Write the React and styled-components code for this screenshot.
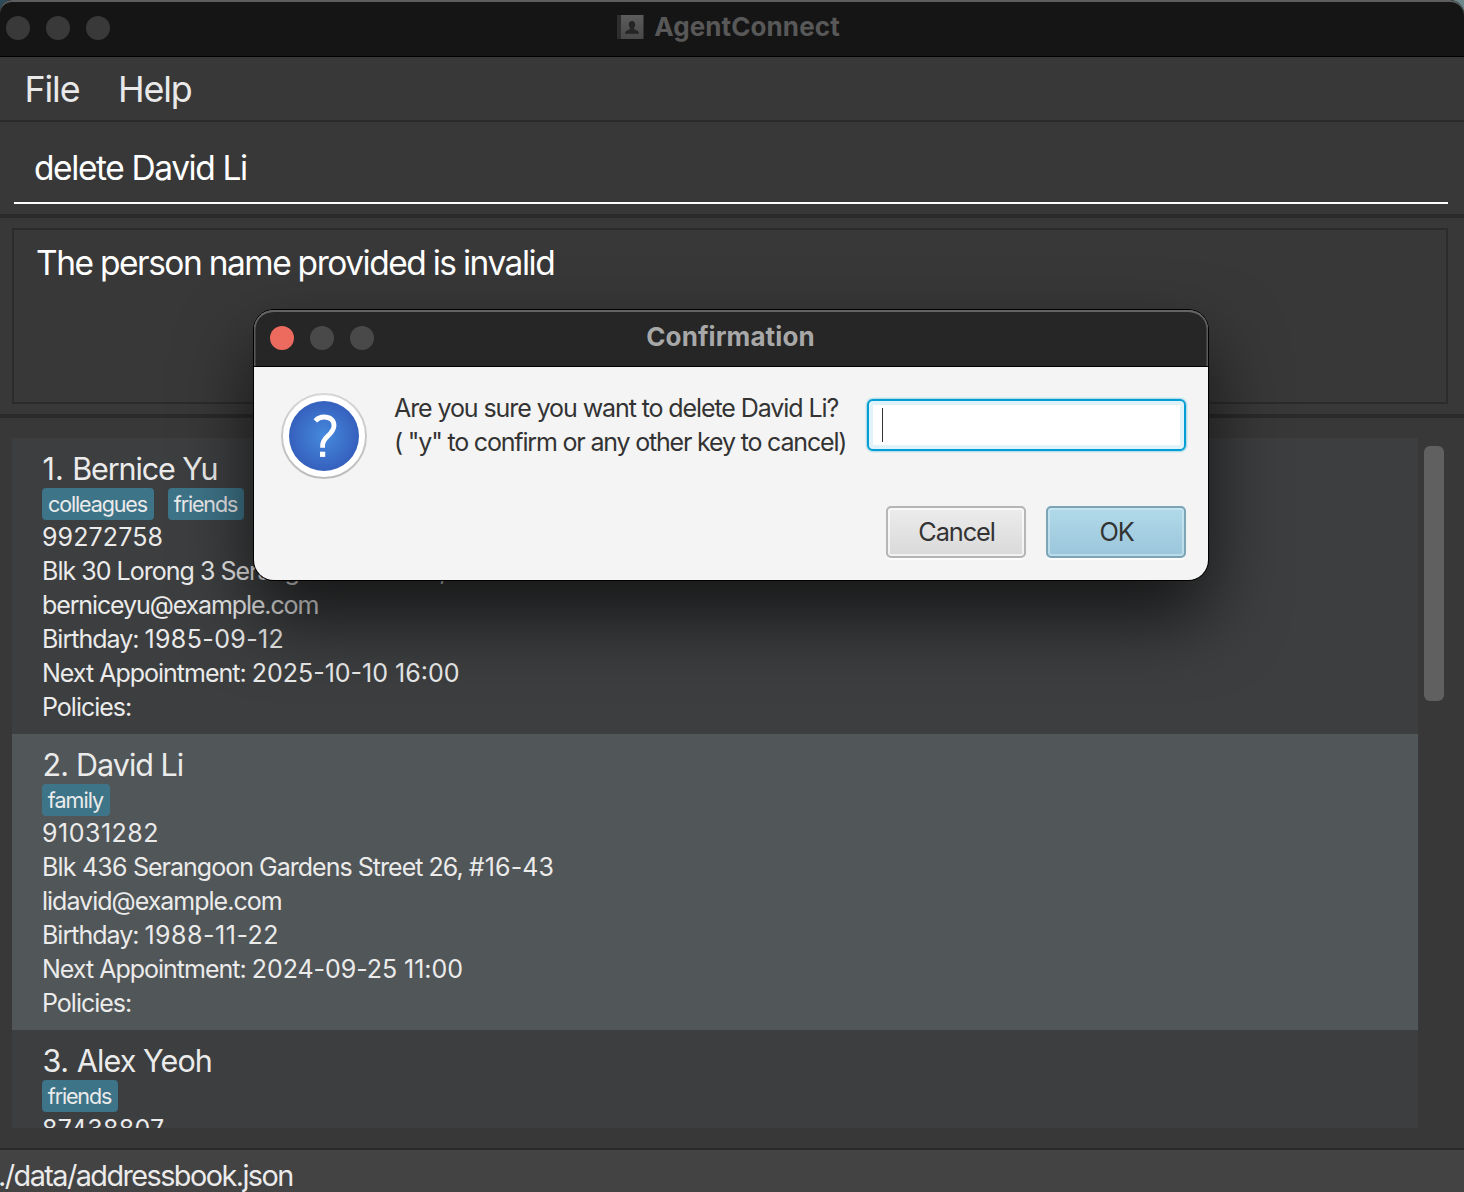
import React from "react";
import styled, { createGlobalStyle, css } from "styled-components";

const GlobalStyle = createGlobalStyle`
  * { box-sizing: border-box; }
  html, body { margin: 0; padding: 0; background: #383838; overflow: hidden; }
  body { font-family: Inter, "Liberation Sans", sans-serif; }
`;

const Desktop = styled.div`
  position: relative;
  width: 1464px;
  height: 1192px;
  overflow: hidden;
  background: linear-gradient(90deg, #2c4a58, #6f8a8d);
`;

const Window = styled.div`
  display: flex;
  flex-direction: column;
  width: 1464px;
  height: 1192px;
  overflow: hidden;
  background: #383838;
  border-radius: 12px 14px 0 0;
`;

const TitleBar = styled.div`
  position: relative;
  flex: none;
  display: flex;
  align-items: center;
  justify-content: center;
  height: 57px;
  background: #151515;
  border-bottom: 1px solid #000;
  border-radius: 12px 14px 0 0;
  box-shadow: inset 0 2px 0 #5c5e5f;
  ${(p) =>
    p.$dialog &&
    css`
      padding: 0 1px 2px 0;
      background: #262626;
      border-radius: 20px 20px 0 0;
      box-shadow: inset 0 2px 0 #646464, inset 2px 0 0 -0.5px #5a5a5a, inset -2px 0 0 -0.5px #5a5a5a;
    `}
`;

const Lights = styled.div`
  position: absolute;
  left: ${(p) => p.$left}px;
  top: 16px;
  display: flex;
  gap: 16px;
`;

const Light = styled.span`
  width: 24px;
  height: 24px;
  border-radius: 50%;
  background: ${(p) => p.$color};
`;

const Title = styled.span`
  display: block;
  font-size: 26px;
  line-height: 32px;
  font-weight: 700;
  letter-spacing: 0.1px;
  color: ${(p) => p.$color};
  white-space: nowrap;
`;

const TitleGroup = styled.div`
  display: flex;
  align-items: center;
  gap: 10px;
  margin: 0 7px 3px 0;
`;

const MenuBar = styled.nav`
  flex: none;
  display: flex;
  align-items: center;
  gap: 38.5px;
  height: 65px;
  padding: 0 0 0 24.5px;
  border-bottom: 2px solid #2a2a2a;
`;

const MenuItem = styled.span`
  font-size: 35.8px;
  line-height: 44px;
  letter-spacing: -1.1px;
  color: #e9e9e9;
`;

const CommandArea = styled.div`
  flex: none;
  height: 96px;
  padding: 12px 16px 0 14px;
  border-bottom: 4px solid #2a2a2a;
`;

const CommandField = styled.div`
  display: flex;
  align-items: center;
  height: 70px;
  padding: 0 0 1px 20px;
  border-bottom: 2px solid #fff;
  font-size: 33.5px;
  letter-spacing: -1.4px;
  color: #fff;
  white-space: pre;
`;

const ResultArea = styled.div`
  flex: none;
  height: 200px;
  padding: 10px 16px 10px 12px;
  border-bottom: 4px solid #2a2a2a;
`;

const ResultBox = styled.div`
  height: 176px;
  padding: 11px 22px;
  border: 2px solid #2b2b2b;
  font-size: 33.5px;
  line-height: 44px;
  letter-spacing: -1.47px;
  word-spacing: -0.6px;
  color: #fff;
`;

const ListArea = styled.div`
  flex: 1;
  min-height: 0;
  display: flex;
  padding: 20px 20px 20px 12px;
`;

const PersonList = styled.div`
  flex: none;
  width: 1406px;
  overflow: hidden;
`;

const Track = styled.div`
  width: 26px;
  padding: 8px 0 0 6px;
`;

const Thumb = styled.div`
  width: 20px;
  height: 255px;
  border-radius: 6px;
  background: #606060;
`;

const Card = styled.div`
  height: 296px;
  padding: 10px 30px;
  background: ${(p) => (p.$alt ? "#515658" : "#3c3e3f")};
  color: #ebebeb;
`;

const Name = styled.div`
  height: 40px;
  padding-left: 0.5px;
  font-size: 30.5px;
  line-height: 42px;
  white-space: pre;
`;

const Tags = styled.div`
  display: flex;
  gap: 14px;
  height: 32px;
`;

const Tag = styled.span`
  width: ${(p) => p.$w}px;
  padding-right: 1px;
  text-align: center;
  border-radius: 4px;
  background: #3e7488;
  font-size: 21.5px;
  line-height: 32px;
  letter-spacing: ${(p) => p.$track}px;
`;

const Line = styled.div`
  height: 34px;
  font-size: 25px;
  line-height: 34px;
  white-space: pre;
`;

const Run = styled.span`
  letter-spacing: ${(p) => p.$track}px;
`;

const StatusBar = styled.footer`
  flex: none;
  height: 44px;
  border-top: 2px solid #2a2a2a;
  background: #434343;
  font-size: 28.8px;
  line-height: 51px;
  letter-spacing: -1.55px;
  text-indent: -2px;
  color: #ebebeb;
  white-space: pre;
`;

const Dialog = styled.section`
  position: absolute;
  left: 254px;
  top: 310px;
  width: 954px;
  height: 270px;
  border-radius: 20px;
  background: #f4f4f4;
  box-shadow: 0 0 0 1px #000, 0 36px 74px rgba(0, 0, 0, 0.66);
`;

const DialogContent = styled.div`
  display: flex;
  height: 139px;
  padding: 26px 21px 0 27px;
`;

const Message = styled.p`
  flex: none;
  width: 473px;
  margin: -2px 0 0 27px;
  font-size: 25px;
  line-height: 34px;
  color: #333;
  white-space: pre;
`;

const MessageLine = styled.span`
  display: block;
  letter-spacing: ${(p) => p.$track}px;
`;

const Field = styled.div`
  flex: none;
  width: 319px;
  height: 52px;
  margin-top: 6px;
  padding: 7px 0 0 13px;
  border: 2px solid #039ed3;
  border-radius: 6px;
  background: #fff;
  box-shadow: 0 0 0 1px #b5dce9, 0 0 0 2px #e0eef2, inset 0 0 0 4px #e1f3fa;
`;

const Caret = styled.div`
  width: 1px;
  height: 34px;
  background: #333;
`;

const Actions = styled.div`
  display: flex;
  justify-content: flex-end;
  gap: 20px;
  padding-right: 22px;
`;

const Button = styled.button`
  width: 140px;
  height: 52px;
  padding: 0 0 2px 1px;
  border: 2px solid ${(p) => (p.$primary ? "#7ea5b6" : "#b5b5b5")};
  border-radius: 5px;
  background: ${(p) =>
    p.$primary ? "linear-gradient(#b1daea, #9bc5da)" : "linear-gradient(#ececec, #d9d9d9)"};
  box-shadow: inset 0 0 0 2px ${(p) => (p.$primary ? "rgba(206,233,243,.6)" : "rgba(255,255,255,.65)")},
    0 2px 0 rgba(255, 255, 255, 0.7);
  font: 400 25.3px Inter, sans-serif;
  letter-spacing: -1.1px;
  color: #333;
`;

const BookIcon = () => (
  <svg width="27" height="26" viewBox="0 0 27 26">
    <defs>
      <linearGradient id="cover" x1="0" y1="0" x2="0" y2="1">
        <stop offset="0" stopColor="#5c5c5c" />
        <stop offset="1" stopColor="#484848" />
      </linearGradient>
    </defs>
    <rect x="0" y="1" width="5" height="24" fill="#2e2e2e" />
    <rect x="4" y="1" width="22.5" height="24" fill="url(#cover)" />
    <path
      d="M15 7c2 0 3.200 1.500 3.200 3.600 0 1.500-.6 2.900-1.500 3.700 .1 1.900 5.400 1.700 5.400 5.400H8c0-3.700 5.200-3.500 5.300-5.400-.9-.8-1.500-2.200-1.500-3.700C11.800 8.500 13 7 15 7z"
      fill="#252525"
    />
  </svg>
);

const QuestionSvg = styled.svg`
  flex: none;
`;

const QuestionIcon = () => (
  <QuestionSvg width="86" height="86" viewBox="0 0 86 86">
    <defs>
      <radialGradient id="blue">
        <stop offset="0" stopColor="#468ade" />
        <stop offset="1" stopColor="#3560bd" />
      </radialGradient>
      <linearGradient id="ring" x1="0" y1="0" x2="0" y2="1">
        <stop offset="0" stopColor="#d6d6d6" />
        <stop offset="1" stopColor="#bcbcbc" />
      </linearGradient>
    </defs>
    <circle cx="43" cy="43" r="42" fill="#fff" stroke="url(#ring)" strokeWidth="2" />
    <circle cx="43" cy="43" r="35" fill="url(#blue)" />
    <path
      d="M34.300 27.800C36.600 25.300 39.500 24 42.900 24 49.300 24 53 27.200 53 32.400 53 41.800 41.600 43 41.600 52.500V54.800"
      fill="none"
      stroke="#fff"
      strokeWidth="4.800"
    />
    <rect x="39" y="58.700" width="5.200" height="5.200" fill="#fff" />
  </QuestionSvg>
);

const people = [
  {
    name: [["1. ", 0], ["Bernice Yu", -1.12]],
    tags: [["colleagues", 112, -1.12], ["friends", 76, -1.15]],
    lines: [
      [["99272758", 0.1]],
      [["Blk 30 Lorong 3 Serangoon Gardens, #07-18", -0.98]],
      [["berniceyu@example.com", -1.12]],
      [["Birthday: ", -1], ["1985-09-12", 0.37]],
      [["Next Appointment: ", -1], ["2025-10-10 16:00", 0]],
      [["Policies:", -1]],
    ],
  },
  {
    name: [["2. ", -0.8], ["David Li", -1]],
    tags: [["family", 68, -0.95]],
    lines: [
      [["91031282", 0.5]],
      [["Blk 436 ", -0.8], ["Serangoon Gardens Street 26, ", -0.98], ["#16-43", 0.15]],
      [["lidavid@example.com", -1]],
      [["Birthday: ", -1], ["1988-11-22", 0.5]],
      [["Next Appointment: ", -1], ["2024-09-25 11:00", -0.05]],
      [["Policies:", -1]],
    ],
  },
  {
    name: [["3. ", -0.4], ["Alex Yeoh", -0.9]],
    tags: [["friends", 76, -1.15]],
    lines: [[["87438807", 0.3]]],
  },
];

const Runs = ({ runs }) =>
  runs.map(([text, track]) => (
    <Run key={text} $track={track}>
      {text}
    </Run>
  ));

export default function App() {
  return (
    <Desktop>
      <GlobalStyle />
      <Window>
        <TitleBar>
          <Lights $left={6}>
            <Light $color="#393939" />
            <Light $color="#393939" />
            <Light $color="#393939" />
          </Lights>
          <TitleGroup>
            <BookIcon />
            <Title $color="#585858">AgentConnect</Title>
          </TitleGroup>
        </TitleBar>
        <MenuBar>
          <MenuItem>File</MenuItem>
          <MenuItem>Help</MenuItem>
        </MenuBar>
        <CommandArea>
          <CommandField>delete David Li</CommandField>
        </CommandArea>
        <ResultArea>
          <ResultBox>The person name provided is invalid</ResultBox>
        </ResultArea>
        <ListArea>
          <PersonList>
            {people.map((p, i) => (
              <Card key={i} $alt={i % 2 === 1}>
                <Name>
                  <Runs runs={p.name} />
                </Name>
                <Tags>
                  {p.tags.map(([label, w, track]) => (
                    <Tag key={label} $w={w} $track={track}>{label}</Tag>
                  ))}
                </Tags>
                {p.lines.map((runs) => (
                  <Line key={runs[0][0]}>
                    <Runs runs={runs} />
                  </Line>
                ))}
              </Card>
            ))}
          </PersonList>
          <Track>
            <Thumb />
          </Track>
        </ListArea>
        <StatusBar>./data/addressbook.json</StatusBar>
      </Window>
      <Dialog>
        <TitleBar $dialog>
          <Lights $left={16}>
            <Light $color="#ed6a5e" />
            <Light $color="#494949" />
            <Light $color="#494949" />
          </Lights>
          <Title $color="#a8a8a8">Confirmation</Title>
        </TitleBar>
        <DialogContent>
          <QuestionIcon />
          <Message>
            <MessageLine $track={-1.09}>Are you sure you want to delete David Li?</MessageLine>
            <MessageLine $track={-1.18}>( "y" to confirm or any other key to cancel)</MessageLine>
          </Message>
          <Field>
            <Caret />
          </Field>
        </DialogContent>
        <Actions>
          <Button>Cancel</Button>
          <Button $primary>OK</Button>
        </Actions>
      </Dialog>
    </Desktop>
  );
}
